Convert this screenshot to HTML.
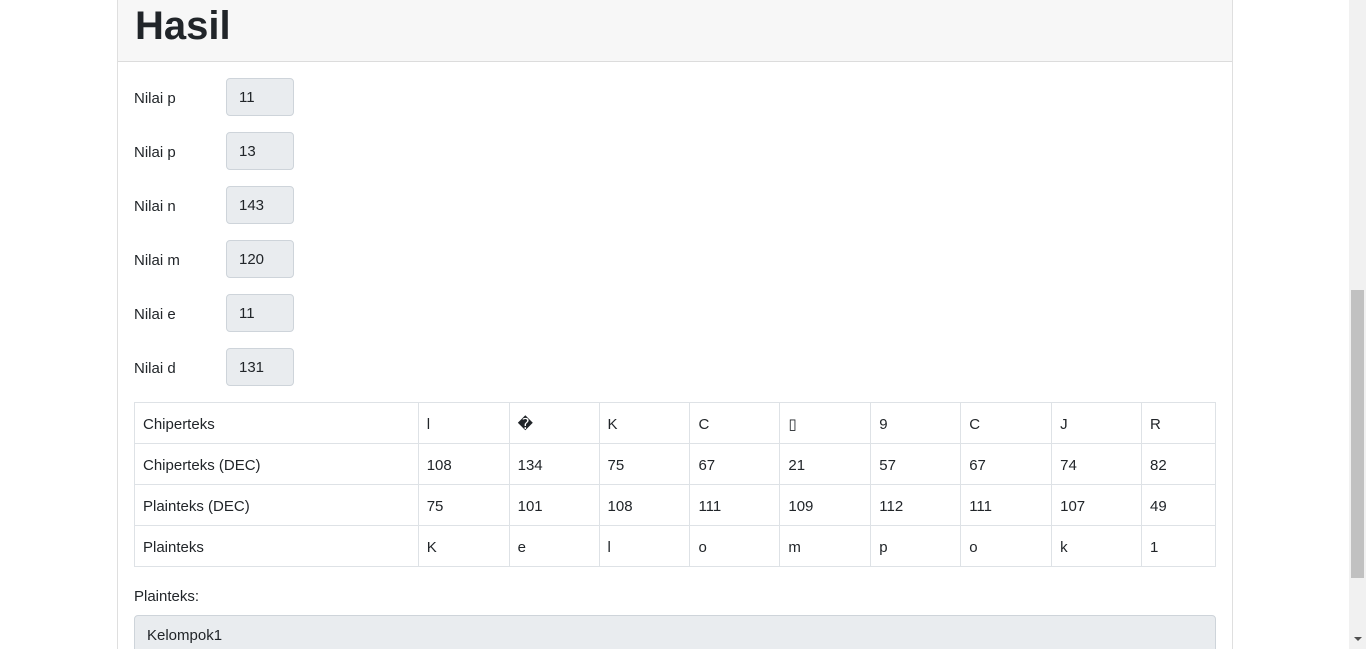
<!DOCTYPE html>
<html style="overflow:hidden;height:649px"><head><meta charset="utf-8"><style>
*{box-sizing:border-box}
body{margin:0;width:1366px;height:649px;overflow:hidden;background:#fff;font-family:"Liberation Sans","DejaVu Sans",sans-serif;color:#212529;font-size:15px;position:relative}
.card{position:absolute;left:117px;top:-10px;width:1116px;height:670px;border:1px solid #dfdfdf;border-radius:4px}
.hdr{height:71px;background:#f7f7f7;border-bottom:1px solid #dcdcdc}
h1{position:absolute;left:17px;top:13px;margin:0;font-size:40px;font-weight:bold;line-height:44px}
.lbl{position:absolute;left:134px;font-size:15px}
.inp{position:absolute;left:226px;width:68px;height:38px;background:#e9ecef;border:1px solid #ced4da;border-radius:4px;padding:10px 12px;font-size:15px;line-height:18px}
table{position:absolute;left:134px;top:402px;border-collapse:collapse;width:1082px;font-size:15px}
td{border:1px solid #dee2e6;height:41px;padding:2px 8px 0}
.sb{position:absolute;left:1349px;top:0;width:17px;height:649px;background:#f1f1f1}
.th{position:absolute;left:1351px;top:290px;width:13px;height:288px;background:#c1c1c1}
</style></head><body>
<div class="card"><div class="hdr"></div><h1>Hasil</h1></div>
<div class="lbl" style="top:90px">Nilai p</div><div class="inp" style="top:78px">11</div>
<div class="lbl" style="top:144px">Nilai p</div><div class="inp" style="top:132px">13</div>
<div class="lbl" style="top:198px">Nilai n</div><div class="inp" style="top:186px">143</div>
<div class="lbl" style="top:252px">Nilai m</div><div class="inp" style="top:240px">120</div>
<div class="lbl" style="top:306px">Nilai e</div><div class="inp" style="top:294px">11</div>
<div class="lbl" style="top:360px">Nilai d</div><div class="inp" style="top:348px">131</div>
<table>
<colgroup><col style="width:284px"><col style="width:91px"><col style="width:90px"><col style="width:91px"><col style="width:90px"><col style="width:91px"><col style="width:90px"><col style="width:91px"><col style="width:90px"><col style="width:74px"></colgroup>
<tr><td>Chiperteks</td><td>l</td><td>�</td><td>K</td><td>C</td><td>▯</td><td>9</td><td>C</td><td>J</td><td>R</td></tr>
<tr><td>Chiperteks (DEC)</td><td>108</td><td>134</td><td>75</td><td>67</td><td>21</td><td>57</td><td>67</td><td>74</td><td>82</td></tr>
<tr><td>Plainteks (DEC)</td><td>75</td><td>101</td><td>108</td><td>111</td><td>109</td><td>112</td><td>111</td><td>107</td><td>49</td></tr>
<tr><td>Plainteks</td><td>K</td><td>e</td><td>l</td><td>o</td><td>m</td><td>p</td><td>o</td><td>k</td><td>1</td></tr>
</table>
<div class="lbl" style="top:588px">Plainteks:</div>
<div style="position:absolute;left:134px;top:615px;width:1082px;height:50px;background:#e9ecef;border:1px solid #ced4da;border-radius:4px;padding:11px 12px">Kelompok1</div>
<div class="sb"></div><div class="th"></div>
<div style="position:absolute;left:1354px;top:637px;width:0;height:0;border-left:4px solid transparent;border-right:4px solid transparent;border-top:4px solid #505050"></div>
</body></html>
